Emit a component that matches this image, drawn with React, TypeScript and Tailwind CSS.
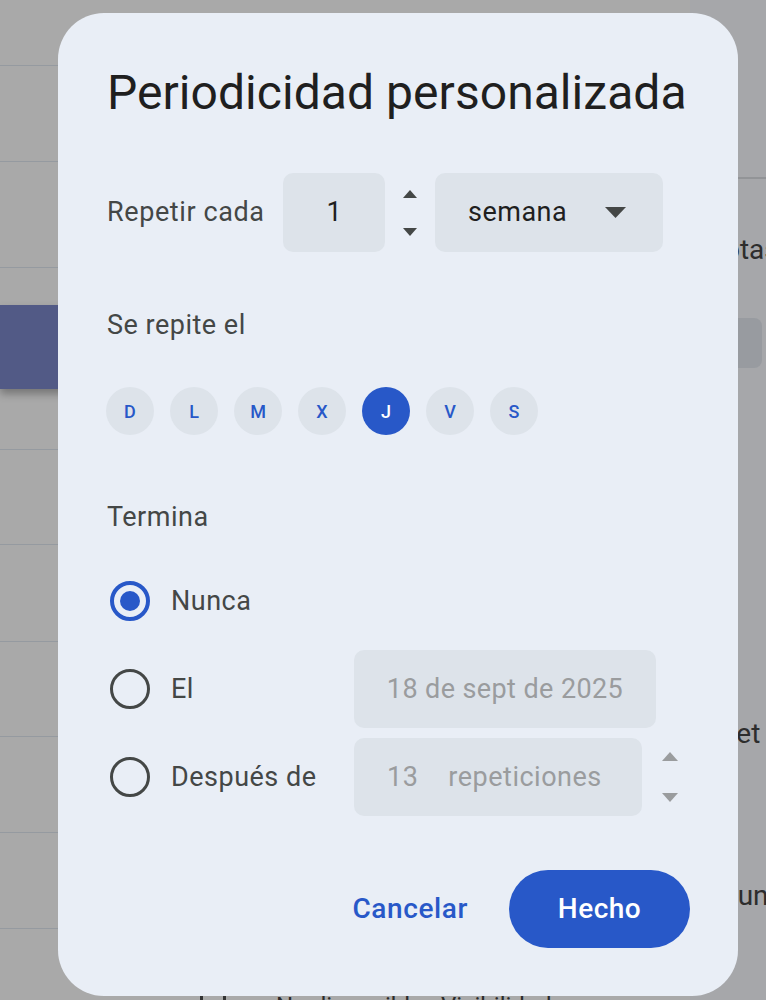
import React from "react";

const Tri = ({ dir, color, w = 14, h = 8 }: { dir: "up" | "down"; color: string; w?: number; h?: number }) => (
  <svg width={w} height={h} viewBox={`0 0 ${w} ${h}`}>
    {dir === "up" ? (
      <polygon points={`0,${h} ${w / 2},0 ${w},${h}`} fill={color} />
    ) : (
      <polygon points={`0,0 ${w},0 ${w / 2},${h}`} fill={color} />
    )}
  </svg>
);

const Radio = ({ checked }: { checked?: boolean }) => (
  <div className="w-[46px] shrink-0 flex justify-center">
    {checked ? (
      <div className="w-[40px] h-[40px] rounded-full border-[4px] border-[#2858c8] flex items-center justify-center">
        <div className="w-[20px] h-[20px] rounded-full bg-[#2858c8]" />
      </div>
    ) : (
      <div className="w-[40px] h-[40px] rounded-full border-[3px] border-[#444746]" />
    )}
  </div>
);

export default function App() {
  const days = ["D", "L", "M", "X", "J", "V", "S"];
  return (
    <div
      className="relative w-[766px] h-[1000px] overflow-hidden bg-[#a9a9a9]"
      style={{ fontFamily: "Roboto, 'Noto Sans', sans-serif" }}
    >
      {/* background page */}
      <div className="flex w-full h-full">
        <div className="w-[690px] shrink-0 flex flex-col">
          <div className="h-[66px] border-b border-[#959aa0]" />
          <div className="h-[96px] border-b border-[#959aa0]" />
          <div className="h-[106px] border-b border-[#959aa0]" />
          <div className="h-[37px]" />
          <div className="h-[84px] bg-[#525a86] shadow-[0_5px_8px_rgba(0,0,0,0.3)]" />
          <div className="h-[61px] border-b border-[#959aa0]" />
          <div className="h-[95px] border-b border-[#959aa0]" />
          <div className="h-[97px] border-b border-[#959aa0]" />
          <div className="h-[95px] border-b border-[#959aa0]" />
          <div className="h-[96px] border-b border-[#959aa0]" />
          <div className="h-[96px] border-b border-[#959aa0]" />
          <div className="flex-1 flex items-end pl-[200px]">
            <div className="flex items-center gap-[50px] mb-[-20px] text-[24px] leading-[28px] text-[#2b2b2b] whitespace-nowrap">
              <div className="w-[26px] h-[26px] border-[3px] border-[#333]" />
              <span>No disponible · Visibilidad</span>
            </div>
          </div>
        </div>
        <div className="flex-1 flex flex-col bg-[#a6a7aa]">
          <div className="h-[179px] border-b-[2px] border-[#929497]" />
          <div className="mt-[55px] text-[28px] leading-[32px] text-[#2d2d2d] pl-[14px] whitespace-nowrap">Notas</div>
          <div className="mt-[52px] h-[50px] w-[72px] rounded-[8px] bg-[#989ba0]" />
          <div className="mt-[350px] text-[28px] leading-[32px] text-[#2d2d2d] pl-[7px] whitespace-nowrap">Meet</div>
          <div className="mt-[130px] text-[28px] leading-[32px] text-[#2d2d2d] pl-[30px] whitespace-nowrap">Punto</div>
        </div>
      </div>

      {/* dialog */}
      <div className="absolute top-[13px] left-[58px] w-[680px] h-[983px] rounded-[46px] bg-[#e9eef6] pl-[49px] pr-[48px] pt-[50px] flex flex-col">
        <div className="h-[60px] flex items-center text-[48px] text-[#1f1f1f] tracking-[0.05px] whitespace-nowrap">
          Periodicidad personalizada
        </div>

        {/* Repetir cada */}
        <div className="mt-[50px] h-[79px] flex items-center">
          <div className="w-[176px] shrink-0 text-[27px] tracking-[0.6px] text-[#444746] whitespace-nowrap">Repetir cada</div>
          <div className="w-[102px] shrink-0 h-[79px] rounded-[10px] bg-[#dde3ea] flex items-center justify-center text-[27px] text-[#1f1f1f]">
            1
          </div>
          <div className="w-[50px] shrink-0 h-[79px] flex flex-col items-center justify-center gap-[30px]">
            <Tri dir="up" color="#444746" />
            <Tri dir="down" color="#444746" />
          </div>
          <div className="w-[228px] shrink-0 h-[79px] rounded-[10px] bg-[#dde3ea] flex items-center justify-between pl-[33px] pr-[37px] text-[27px] tracking-[0.5px] text-[#1f1f1f]">
            <span>semana</span>
            <Tri dir="down" color="#444746" w={21} h={11} />
          </div>
        </div>

        {/* Se repite el */}
        <div className="mt-[58px] h-[30px] flex items-center text-[27px] tracking-[0.5px] text-[#444746]">Se repite el</div>
        <div className="mt-[47px] flex gap-[16px] ml-[-1px]">
          {days.map((d) => (
            <div
              key={d}
              className={
                d === "J"
                  ? "w-[48px] h-[48px] rounded-full bg-[#2858c8] text-white flex items-center justify-center text-[18px] font-medium"
                  : "w-[48px] h-[48px] rounded-full bg-[#dde3ea] text-[#2858c8] flex items-center justify-center text-[18px] font-medium"
              }
            >
              {d}
            </div>
          ))}
        </div>

        {/* Termina */}
        <div className="mt-[67px] h-[30px] flex items-center text-[27px] tracking-[0.5px] text-[#444746]">Termina</div>

        <div className="mt-[47px] h-[44px] flex items-center">
          <Radio checked />
          <span className="ml-[18px] text-[27px] tracking-[0.5px] text-[#444746]">Nunca</span>
        </div>

        <div className="mt-[27px] h-[78px] flex items-center">
          <Radio />
          <span className="ml-[18px] w-[183px] shrink-0 text-[27px] tracking-[0.5px] text-[#444746]">El</span>
          <div className="w-[302px] shrink-0 h-[78px] rounded-[10px] bg-[#dde3ea] flex items-center justify-center text-[27px] tracking-[0.4px] text-[#9a9c9e] whitespace-nowrap">
            18 de sept de 2025
          </div>
        </div>

        <div className="mt-[10px] h-[78px] flex items-center">
          <Radio />
          <span className="ml-[18px] w-[183px] shrink-0 text-[27px] tracking-[0.5px] text-[#444746] whitespace-nowrap">Después de</span>
          <div className="w-[288px] shrink-0 h-[78px] rounded-[10px] bg-[#dde3ea] flex items-center pl-[33px] text-[27px] tracking-[0.5px] text-[#9a9c9e] whitespace-nowrap">
            <span>13</span>
            <span className="ml-[30px]">repeticiones</span>
          </div>
          <div className="w-[56px] shrink-0 h-[78px] flex flex-col items-center justify-center gap-[32px]">
            <Tri dir="up" color="#9a9c9e" w={16} h={9} />
            <Tri dir="down" color="#9a9c9e" w={16} h={9} />
          </div>
        </div>

        {/* buttons */}
        <div className="mt-[54px] flex items-center justify-end">
          <button className="text-[28px] tracking-[0.6px] font-medium text-[#2858c8] mr-[41px]">Cancelar</button>
          <button className="w-[181px] h-[78px] rounded-full bg-[#2858c8] text-white text-[28px] tracking-[0.5px] font-medium">Hecho</button>
        </div>
      </div>
    </div>
  );
}
